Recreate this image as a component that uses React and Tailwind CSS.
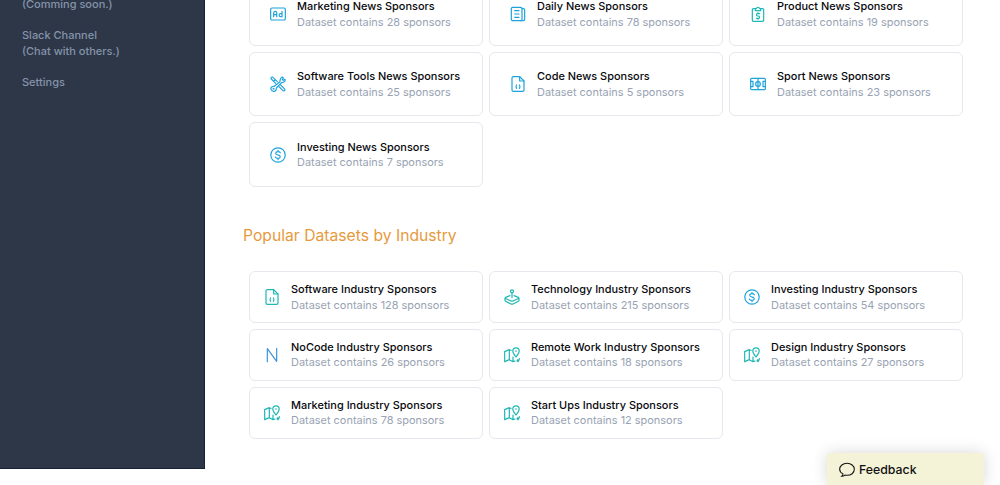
import React from "react";

const BLUE = "#1fa3dc";
const TEAL = "#1fb8b4";
const SKY = "#3b94dd";

function Icon({ name, color }) {
  return (
    <svg
      viewBox="0 0 24 24"
      className="h-4 w-4 shrink-0"
      fill="none"
      stroke={color}
      strokeWidth="1.8"
      strokeLinecap="round"
      strokeLinejoin="round"
    >
      {icons[name]}
    </svg>
  );
}

const icons = {
  ad: (
    <>
      <rect x="1" y="3" width="22" height="18" rx="2" />
      <path d="M5.5 16v-5.500a2.300 2.300 0 0 1 4.600 0V16M5.500 13h4.600M18 8v8M18 11.500h-2a2.200 2.200 0 0 0 0 4.500h2" />
    </>
  ),
  news: (
    <>
      <rect x="2" y="2" width="16" height="20" rx="2" />
      <path d="M18 4h2a2 2 0 0 1 2 2v14a2 2 0 0 1-2 2h-4M7 7h6.500M7 12h6.500M7 17h6.500" />
    </>
  ),
  clipboard: (
    <>
      <path d="M8 4H5a1.500 1.500 0 0 0-1.500 1.500v16A1.500 1.500 0 0 0 5 23h14a1.500 1.500 0 0 0 1.500-1.500v-16A1.500 1.500 0 0 0 19 4h-3" />
      <path d="M8 7h8V4h-1.500a2.600 2.600 0 0 0-5 0H8z" />
      <path d="M14.500 11.500H11a1.800 1.800 0 0 0 0 3.500h2a1.800 1.800 0 0 1 0 3.500H9.500M12 10v1.500M12 18.500V20" />
    </>
  ),
  tools: (
    <>
      <path d="M8.500 11 2 4.500Q1 3 2 2t2.500 0L11 8.500M15.500 13l6 6q1.500 1.500.3 2.700t-2.800-.2l-6-6M5.500 8l2-2" />
      <path d="M15 8.500q-.5-5 3.500-7L20 3l-1.500 2.500 1.500 1L22.500 5q1 4.500-5 5L9.500 18q.5 4-3 5-3 .5-4.500-2t.5-4.500q1.500-1.500 4-1z" />
      <circle cx="5.300" cy="19" r=".6" />
    </>
  ),
  code: (
    <>
      <path d="M14.500 1H5a2 2 0 0 0-2 2v18a2 2 0 0 0 2 2h14a2 2 0 0 0 2-2V7.500z" />
      <path d="M14.500 1v6.500H21M9.800 13.500q-1.500 2.500 0 5M14.200 13.500q1.500 2.500 0 5" />
    </>
  ),
  sport: (
    <>
      <rect x="1" y="3.500" width="22" height="17" rx="1.500" />
      <circle cx="12" cy="12" r="3.500" />
      <path d="M12 3.500v17M1 8h3.500v8H1M23 8h-3.500v8H23" />
    </>
  ),
  dollar: (
    <>
      <circle cx="12" cy="12" r="10.800" />
      <path d="M15.500 8.500c-.5-1-1.800-1.500-3.500-1.500-4.500 0-4.500 4.300-.5 4.900 5 .6 5 5.100.5 5.100-2 0-3.300-.6-4-1.800M12 5v2M12 17v2" />
    </>
  ),
  n: <path d="M5 22V2.500l14 19V2" />,
  joystick: (
    <>
      <circle cx="12" cy="3.500" r="2.300" />
      <path d="M12 6v7M9 10l-6.500 2.500q-1.500.8 0 1.800L10.500 18q1.500.6 3 0l8-3.700q1.500-1 0-1.800L15 10M1.500 13.500V17q0 1 1 1.500l8 4q1.500.6 3 0l8-4q1-.5 1-1.500v-3.500" />
    </>
  ),
  map: (
    <>
      <path d="M8 4v15L1 22V7zM8 19l5.500 3v-7M8 4l2.500 1.200M13.500 22l3-1M19.500 21q3.500-.5 3.500-3.500M19.500 21l1-2M19.500 21l2 1" />
      <path d="M18 15c-2.800-3.500-4.800-6-4.800-9a4.800 4.800 0 0 1 9.600 0c0 3-2 5.500-4.800 9z" />
      <circle cx="18" cy="6" r=".4" />
    </>
  ),
};

const news = [
  { title: "Marketing News Sponsors", count: 28, icon: "ad", color: BLUE },
  { title: "Daily News Sponsors", count: 78, icon: "news", color: BLUE },
  { title: "Product News Sponsors", count: 19, icon: "clipboard", color: TEAL },
  { title: "Software Tools News Sponsors", count: 25, icon: "tools", color: BLUE },
  { title: "Code News Sponsors", count: 5, icon: "code", color: BLUE },
  { title: "Sport News Sponsors", count: 23, icon: "sport", color: BLUE },
  { title: "Investing News Sponsors", count: 7, icon: "dollar", color: BLUE },
];

const industries = [
  { title: "Software Industry Sponsors", count: 128, icon: "code", color: TEAL },
  { title: "Technology Industry Sponsors", count: 215, icon: "joystick", color: TEAL },
  { title: "Investing Industry Sponsors", count: 54, icon: "dollar", color: BLUE },
  { title: "NoCode Industry Sponsors", count: 26, icon: "n", color: SKY },
  { title: "Remote Work Industry Sponsors", count: 18, icon: "map", color: TEAL },
  { title: "Design Industry Sponsors", count: 27, icon: "map", color: TEAL },
  { title: "Marketing Industry Sponsors", count: 78, icon: "map", color: TEAL },
  { title: "Start Ups Industry Sponsors", count: 12, icon: "map", color: TEAL },
];

function Card({ item, className }) {
  return (
    <div className={"flex items-center rounded-md border border-[#e5e8ec] bg-white " + className}>
      <Icon name={item.icon} color={item.color} />
      <div className="pt-[1.5px] text-[10.95px] leading-[15.6px] whitespace-nowrap">
        <p className="font-medium text-[#08090d]">{item.title}</p>
        <p className="text-[#98a3b3]">Dataset contains {item.count} sponsors</p>
      </div>
    </div>
  );
}

function App() {
  return (
    <div className="relative flex h-[485px] items-start overflow-hidden bg-white font-['Inter',sans-serif]">
      <aside className="h-[469px] w-[205px] shrink-0 overflow-hidden border-r border-b border-[#1a2035] bg-[#2d3748] pl-[22px] text-[11px] leading-[15.7px] font-medium text-[#8593a8]">
        <p className="-mt-[3.5px]">(Comming soon.)</p>
        <p className="mt-[15.7px]">
          Slack Channel
          <br />
          (Chat with others.)
        </p>
        <p className="mt-[15.7px]">Settings</p>
      </aside>

      <main className="-mt-[18.5px] pl-11">
        <div className="grid grid-cols-[repeat(3,234px)] gap-x-1.5 gap-y-[5.9px]">
          {news.map((item) => (
            <Card key={item.title} item={item} className="h-[64.5px] gap-[11px] pl-5" />
          ))}
        </div>

        <h2 className="mt-[37.5px] -ml-1.5 text-[15.7px] leading-6 text-[#e69a3e]">
          Popular Datasets by Industry
        </h2>

        <div className="mt-[22.5px] grid grid-cols-[repeat(3,234px)] gap-x-1.5 gap-y-[5.9px]">
          {industries.map((item) => (
            <Card key={item.title} item={item} className="h-[52px] gap-[11px] pl-3.5" />
          ))}
        </div>
      </main>

      {/* Feedback widget */}
      <button className="absolute right-4 bottom-0 flex h-8 w-[157px] items-center gap-1 rounded-t bg-[#f4f3d8] pt-[2px] pl-3 text-[12.3px] font-medium text-[#111] shadow-[0_0_16px_rgba(0,0,0,0.16)]">
        <svg viewBox="0 0 24 24" className="h-4 w-4" fill="none" stroke="currentColor" strokeWidth="1.6">
          <path d="M6 17.800C3 16.500 1 14 1 11 1 5.500 6 2 12 2s11 3.500 11 9-5 9-11 9c-1 0-2-.1-3-.3-1.500 1.300-3 1.800-5 1.800 1-.8 2-2 2-3.700z" />
        </svg>
        Feedback
      </button>
    </div>
  );
}

export default App;
